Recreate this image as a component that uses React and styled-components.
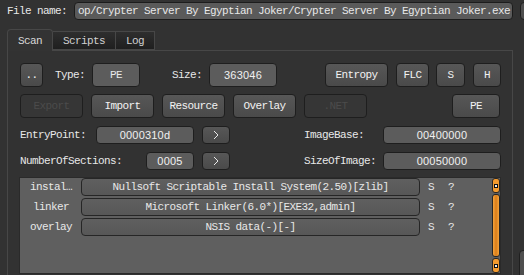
import React from "react";
import styled, { createGlobalStyle, css } from "styled-components";

const mono = `"Liberation Mono", "DejaVu Sans Mono", monospace`;
const sans = `"Liberation Sans", Arial, sans-serif`;

const GlobalStyle = createGlobalStyle`
  html, body { margin: 0; padding: 0; background: #323232; overflow: hidden; }
  body { font-family: ${mono}; font-size: 11px; color: #e6e6e6; }
  * { box-sizing: border-box; }
`;

const Page = styled.div`
  display: grid;
  grid-template-columns: 506px 40px;
  column-gap: 7px;
  width: 524px;
  height: 275px;
  padding: 2px 0 0 7px;
  overflow: hidden;
`;

const Main = styled.div`
  display: flex;
  flex-direction: column;
`;

const Side = styled.div`
  display: flex;
  flex-direction: column;
`;

const SideBtn = styled.div`
  height: ${(p) => p.$h}px;
  margin-top: ${(p) => p.$mt || 0}px;
  margin-left: ${(p) => p.$ml || 0}px;
  border-radius: 4px;
  border: 1px solid #1f1f1f;
  background: #4e4e4e;
`;

const FileRow = styled.div`
  display: flex;
  align-items: center;
  height: 18px;
`;

const Text = styled.span`
  font-family: ${mono};
  font-size: 11px;
  letter-spacing: -0.6px;
  white-space: nowrap;
  color: #e8e8e8;
  margin-left: ${(p) => p.$ml || 0}px;
`;

const FileLabel = styled(Text)`
  width: 67px;
`;

const FileInput = styled.div`
  flex: 1;
  height: 18px;
  border: 1px solid #1c1c1c;
  border-radius: 4px;
  background: #5a5a5a;
  display: flex;
  align-items: center;
  padding-left: 3px;
  overflow: hidden;
`;

const TabBar = styled.div`
  display: flex;
  align-items: flex-end;
  margin-top: 9px;
  height: 21px;
  position: relative;
  z-index: 1;
`;

const Tab = styled.div`
  height: ${(p) => (p.$active ? 22 : 19)}px;
  width: ${(p) => p.$w}px;
  display: flex;
  align-items: center;
  justify-content: center;
  border: 1px solid #474747;
  border-bottom: ${(p) => (p.$active ? "none" : "1px solid #474747")};
  border-left: ${(p) => (p.$first ? "1px solid #474747" : "none")};
  border-radius: ${(p) => (p.$active ? "4px 4px 0 0" : "0")};
  margin-bottom: ${(p) => (p.$active ? -1 : 0)}px;
  background: ${(p) =>
    p.$active ? "#333333" : "linear-gradient(#2e2e2e, #1f1f1f)"};
  ${Text} { color: ${(p) => (p.$active ? "#d8d8d8" : "#d0d0d0")}; }
`;

const Panel = styled.div`
  border: 1px solid #474747;
  padding: 12px 12px 0 12px;
  height: 240px;
  display: flex;
  flex-direction: column;
`;

const Row = styled.div`
  display: flex;
  align-items: center;
  height: ${(p) => p.$h}px;
  margin-top: ${(p) => p.$mt || 0}px;
`;

const boxBase = css`
  height: 100%;
  width: ${(p) => p.$w}px;
  margin-left: ${(p) => (p.$ml === "auto" ? "auto" : `${p.$ml || 0}px`)};
  border-radius: 4px;
  display: flex;
  align-items: center;
  justify-content: center;
  flex-shrink: 0;
`;

const Button = styled.div`
  ${boxBase};
  border: 1px solid #1e1e1e;
  background: ${(p) =>
    p.$disabled ? "#363636" : "linear-gradient(#575757, #4a4a4a)"};
  ${Text} { color: ${(p) => (p.$disabled ? "#4b4b4b" : "#f2f2f2")}; }
`;

const Value = styled.div`
  ${boxBase};
  border: 1px solid #1e1e1e;
  background: #5c5c5c;
`;

const NumText = styled.span`
  font-family: ${sans};
  font-size: 11px;
  color: #f0f0f0;
  letter-spacing: 0.2px;
`;

const Label = styled(Text)`
  width: ${(p) => p.$w}px;
  flex-shrink: 0;
`;

const InfoGrid = styled.div`
  display: grid;
  grid-template-columns: 76px 98px 36px 153px 118px;
  height: 18px;
  margin-top: 8px;
  align-items: center;
`;

const Arrow = styled(Button)`
  width: 28px;
  margin-left: 8px;
`;

const List = styled.div`
  margin-top: 7px;
  margin-left: -1px;
  margin-right: -1px;
  height: 97px;
  border: 1px solid #2a2a2a;
  background: #5f5f5f;
  display: grid;
  grid-template-columns: 1fr 8px;
  padding: 0 0 0 1px;
`;

const Rows = styled.div`
  display: flex;
  flex-direction: column;
  gap: 2px;
`;

const ListRow = styled.div`
  display: flex;
  align-items: center;
  height: 18px;
`;

const RowName = styled(Text)`
  width: 60px;
  text-align: center;
`;

const RowBox = styled.div`
  width: 339px;
  height: 18px;
  border: 1px solid #262626;
  border-radius: 4px;
  background: linear-gradient(#5f5f5f, #575757);
  display: flex;
  align-items: center;
  justify-content: center;
`;

const Scroll = styled.div`
  display: flex;
  flex-direction: column;
  gap: 1px;
`;

const ScrollBtn = styled.div`
  height: 15px;
  border: 1px solid #262626;
  border-radius: 3px;
  background: #f29a2e;
  display: flex;
  align-items: center;
  justify-content: center;
  &::after {
    content: "";
    width: 4px;
    height: 4px;
    background: #111;
    box-shadow: inset 0 0 0 1px #111, inset 0 0 0 2px #eee;
  }
`;

const Thumb = styled.div`
  flex: 1;
  border: 1px solid #262626;
  border-radius: 3px;
  background: linear-gradient(90deg, #f7a43a, #d97d1a 50%, #f7a43a);
`;

const rowData = [
  ["instal…", "Nullsoft Scriptable Install System(2.50)[zlib]"],
  ["linker", "Microsoft Linker(6.0*)[EXE32,admin]"],
  ["overlay", "NSIS data(-)[-]"],
];

const ChevronRight = () => (
  <svg width="8" height="10" viewBox="0 0 8 10">
    <path d="M2 1 L6 5 L2 9" fill="none" stroke="#e8e8e8" strokeWidth="1" />
  </svg>
);

export default function App() {
  return (
    <>
      <GlobalStyle />
      <Page>
        <Main>
          <FileRow>
            <FileLabel>File name:</FileLabel>
            <FileInput>
              <Text>
                op/Crypter Server By Egyptian Joker/Crypter Server By Egyptian Joker.exe
              </Text>
            </FileInput>
          </FileRow>
          <TabBar>
            <Tab $active $first $w={46}>
              <Text>Scan</Text>
            </Tab>
            <Tab $w={63}>
              <Text>Scripts</Text>
            </Tab>
            <Tab $w={39}>
              <Text>Log</Text>
            </Tab>
          </TabBar>
          <Panel>
            <Row $h={24}>
              <Button $w={23}>
                <Text>..</Text>
              </Button>
              <Label $ml={12} $w={37}>Type:</Label>
              <Value $w={48}>
                <Text>PE</Text>
              </Value>
              <Label $ml={32} $w={37}>Size:</Label>
              <Value $w={68}>
                <NumText>363046</NumText>
              </Value>
              <Button $ml={48} $w={63}>
                <Text>Entropy</Text>
              </Button>
              <Button $ml={8} $w={33}>
                <Text>FLC</Text>
              </Button>
              <Button $ml={7} $w={29}>
                <Text>S</Text>
              </Button>
              <Button $ml={8} $w={28}>
                <Text>H</Text>
              </Button>
            </Row>
            <Row $h={24} $mt={7}>
              <Button $w={63} $disabled>
                <Text>Export</Text>
              </Button>
              <Button $ml={8} $w={63}>
                <Text>Import</Text>
              </Button>
              <Button $ml={8} $w={63}>
                <Text>Resource</Text>
              </Button>
              <Button $ml={8} $w={63}>
                <Text>Overlay</Text>
              </Button>
              <Button $ml={8} $w={63} $disabled>
                <Text>.NET</Text>
              </Button>
              <Button $ml="auto" $w={48}>
                <Text>PE</Text>
              </Button>
            </Row>
            <InfoGrid>
              <Text>EntryPoint:</Text>
              <Value $w={98}>
                <NumText>0000310d</NumText>
              </Value>
              <Arrow>
                <ChevronRight />
              </Arrow>
              <Text $ml={74}>ImageBase:</Text>
              <Value $w={118}>
                <NumText>00400000</NumText>
              </Value>
            </InfoGrid>
            <InfoGrid>
              <Text>NumberOfSections:</Text>
              <Value $w={48} $ml={50}>
                <NumText>0005</NumText>
              </Value>
              <Arrow>
                <ChevronRight />
              </Arrow>
              <Text $ml={74}>SizeOfImage:</Text>
              <Value $w={118}>
                <NumText>00050000</NumText>
              </Value>
            </InfoGrid>
            <List>
              <Rows>
                {rowData.map(([name, desc]) => (
                  <ListRow key={name}>
                    <RowName>{name}</RowName>
                    <RowBox>
                      <Text>{desc}</Text>
                    </RowBox>
                    <Text $ml={8}>S</Text>
                    <Text $ml={14}>?</Text>
                  </ListRow>
                ))}
              </Rows>
              <Scroll>
                <ScrollBtn />
                <Thumb />
                <ScrollBtn />
              </Scroll>
            </List>
          </Panel>
        </Main>
        <Side>
          <SideBtn $h={18} />
          <SideBtn $h={30} $mt={230} $ml={-1} />
        </Side>
      </Page>
    </>
  );
}
